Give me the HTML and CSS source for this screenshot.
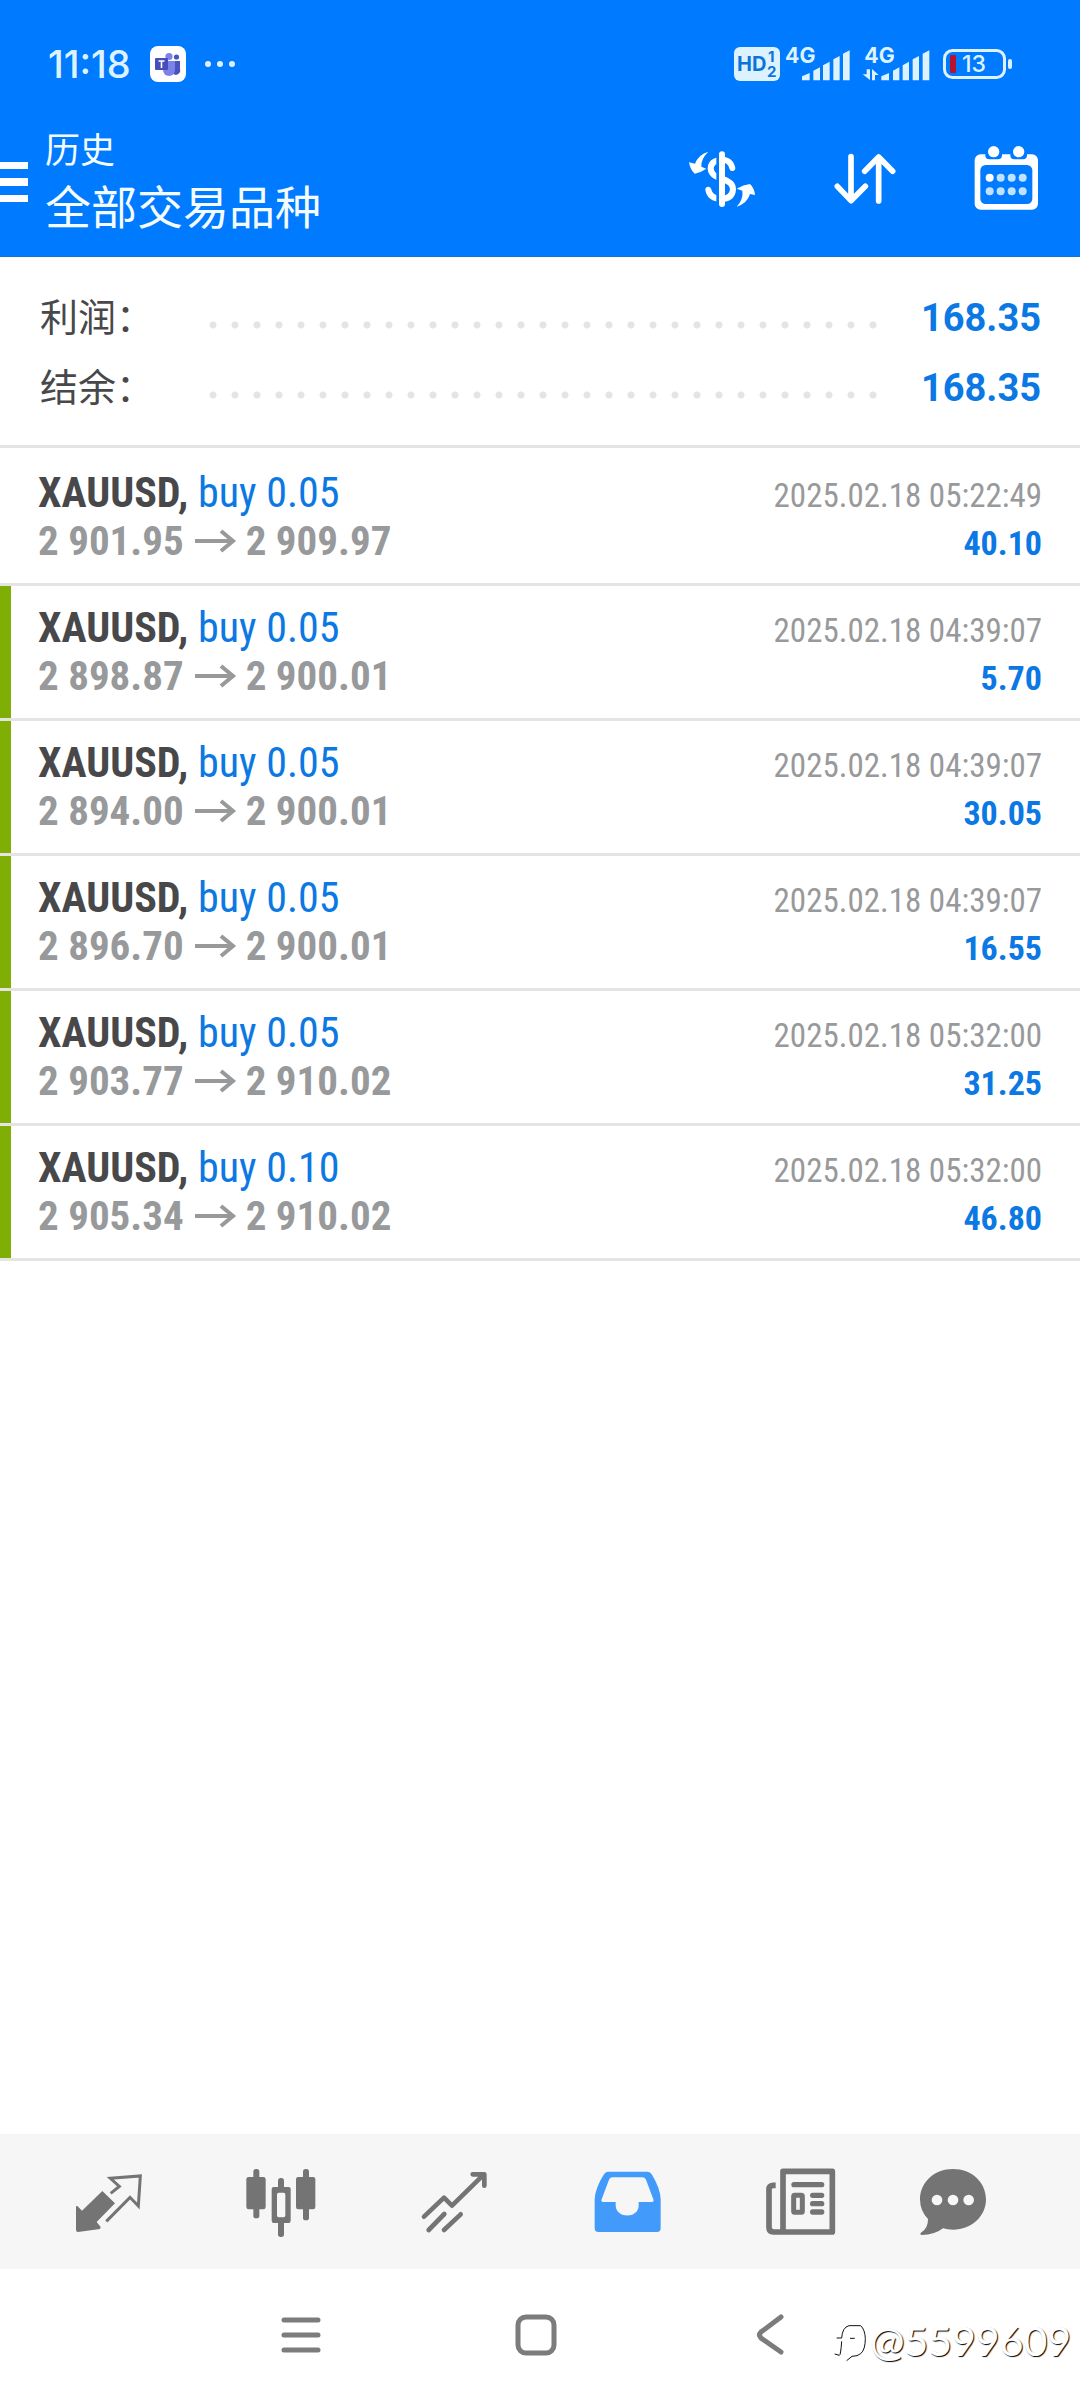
FILE: index.html
```html
<!DOCTYPE html>
<html lang="zh-CN">
<head>
<meta charset="utf-8">
<meta name="viewport" content="width=device-width, initial-scale=1">
<title>历史</title>
<link rel="stylesheet" href="styles.css">
</head>
<body>
<header class="top">
  <div class="status">
    <span class="clock">11:18</span>
    <svg class="teams" viewBox="0 0 36 36" aria-hidden="true">
      <rect width="36" height="36" rx="8" fill="#fff"/>
      <circle cx="26.5" cy="11" r="2.6" fill="#4b53bc"/>
      <path d="M22 15h8v8a4 4 0 0 1-8 3z" fill="#4b53bc"/>
      <circle cx="19" cy="10.5" r="3.6" fill="#7b83eb"/>
      <path d="M13 15h12v9a6 6 0 0 1-12 0z" fill="#7b83eb"/>
      <rect x="5" y="12" width="13" height="12" rx="1" fill="#464eb8"/>
      <path d="M8.5 15h6M11.5 15v7" stroke="#fff" stroke-width="1.6"/>
    </svg>
    <svg class="more" viewBox="0 0 32 8" aria-hidden="true"><circle cx="4" cy="4" r="3"/><circle cx="16" cy="4" r="3"/><circle cx="28" cy="4" r="3"/></svg>
    <div class="system">
      <svg width="46" height="34" viewBox="0 0 46 34"><rect width="46" height="34" rx="6"/><g class="badge-text"><text x="3" y="24" font-size="20">HD</text><text x="34" y="15" font-size="15">1</text><text x="33" y="30" font-size="15">2</text></g></svg>
      <svg class="cell" width="68" height="34" viewBox="195 33 204 102"><text x="195" y="82" font-size="64">4G</text><path d="M246 133V121L269 111V133ZM280 133V104L300 94V133ZM309 133V88L329 77V133ZM340 133V70L359 60V133ZM369 133V53L389 43V133Z"/></svg>
      <svg class="cell" width="68" height="34" viewBox="428 33 204 102"><text x="432" y="82" font-size="64">4G</text><path d="M483 133V121L506 111V133ZM518 133V104L537 94V133ZM547 133V88L566 77V133ZM577 133V70L596 60V133ZM607 133V53L627 43V133ZM439 100H449V132L427 115H439ZM455 133V99L475 117H464V133Z"/></svg>
      <svg class="battery" width="70" height="30" viewBox="0 0 70 30"><rect x="1.5" y="1.5" width="60" height="27" rx="8" fill="none" stroke="#dcf3ff" stroke-width="3"/><rect x="65" y="10" width="4" height="10" rx="2"/><rect x="7" y="6" width="6" height="18" rx="1" fill="#b8122c"/><text x="19" y="23" font-size="23">13</text></svg>
    </div>
  </div>
  <div class="bar">
    <button class="menu" aria-label="菜单"><svg width="28" height="40" viewBox="0 0 28 40"><path d="M0 0h28v7H0zM0 16h28v8H0zM0 33h28v7H0z" fill="#fff"/></svg></button>
    <div class="titles">
      <p class="section">历史</p>
      <h1 class="title">全部交易品种</h1>
    </div>
    <div class="actions">
      <button class="action" aria-label="货币"><svg viewBox="90 384 192 192">
        <path d="M217 450C212 429 196 424 182 426C162 428 152 438 152 452C154 472 170 476 186 482C208 490 219 498 219 515C217 535 203 543 184 543C160 542 148 532 145 515" fill="none" stroke="#fff" stroke-width="18" stroke-linecap="round"/>
        <path d="M173 396V572" stroke="#007aff" stroke-width="8"/><path d="M186 409V558" stroke="#fff" stroke-width="18" stroke-linecap="round"/>
        <path d="M87 433L105 437Q116 409 145 401Q122 424 124 446L139 452Q122 464 104 467Q91 456 87 433ZM230 512Q250 500 270 498Q283 510 285 531L270 528Q262 556 230 566Q251 543 247 518Z" fill="#fff"/></svg></button>
      <button class="action" aria-label="排序"><svg viewBox="516 384 192 192"><path d="M573 416V547M532 505L573 548L616 505M656 549V418M614 460L656 417L698 460" fill="none" stroke="#fff" stroke-width="17" stroke-linecap="round" stroke-linejoin="round"/></svg></button>
      <button class="action" aria-label="日期"><svg viewBox="943 384 192 192">
        <rect x="945" y="409" width="190" height="166" rx="18" fill="#fff"/><rect x="962" y="441" width="156" height="117" rx="16" fill="#007aff"/>
        <rect x="977" y="390" width="50" height="34" rx="12" fill="#007aff"/><rect x="1052" y="390" width="50" height="34" rx="12" fill="#007aff"/>
        <g fill="#fff"><circle cx="1002" cy="401" r="17"/><circle cx="1077" cy="401" r="17"/><circle cx="990" cy="479" r="12"/></g>
        <g fill="#bfe2ff"><circle cx="1023" cy="479" r="12"/><circle cx="1056" cy="479" r="12"/><circle cx="1089" cy="479" r="12"/><circle cx="990" cy="520" r="12"/><circle cx="1023" cy="520" r="12"/><circle cx="1056" cy="520" r="12"/><circle cx="1089" cy="520" r="12"/></g></svg></button>
    </div>
  </div>
</header>

<main class="content">
  <dl class="summary">
    <div class="sum-row"><dt>利润：</dt><dd>168.35</dd></div>
    <div class="sum-row"><dt>结余：</dt><dd>168.35</dd></div>
  </dl>
  <ul class="deals">
    <li class="deal">
      <p class="name"><b>XAUUSD,</b> buy 0.05</p><time class="date">2025.02.18 05:22:49</time>
      <p class="price">2 901.95<svg class="arrow" viewBox="0 0 40 22"><path d="M0 11H37M26 1L38 11L26 21"/></svg>2 909.97</p><span class="profit">40.10</span>
    </li>
    <li class="deal marked">
      <p class="name"><b>XAUUSD,</b> buy 0.05</p><time class="date">2025.02.18 04:39:07</time>
      <p class="price">2 898.87<svg class="arrow" viewBox="0 0 40 22"><path d="M0 11H37M26 1L38 11L26 21"/></svg>2 900.01</p><span class="profit">5.70</span>
    </li>
    <li class="deal marked">
      <p class="name"><b>XAUUSD,</b> buy 0.05</p><time class="date">2025.02.18 04:39:07</time>
      <p class="price">2 894.00<svg class="arrow" viewBox="0 0 40 22"><path d="M0 11H37M26 1L38 11L26 21"/></svg>2 900.01</p><span class="profit">30.05</span>
    </li>
    <li class="deal marked">
      <p class="name"><b>XAUUSD,</b> buy 0.05</p><time class="date">2025.02.18 04:39:07</time>
      <p class="price">2 896.70<svg class="arrow" viewBox="0 0 40 22"><path d="M0 11H37M26 1L38 11L26 21"/></svg>2 900.01</p><span class="profit">16.55</span>
    </li>
    <li class="deal marked">
      <p class="name"><b>XAUUSD,</b> buy 0.05</p><time class="date">2025.02.18 05:32:00</time>
      <p class="price">2 903.77<svg class="arrow" viewBox="0 0 40 22"><path d="M0 11H37M26 1L38 11L26 21"/></svg>2 910.02</p><span class="profit">31.25</span>
    </li>
    <li class="deal marked">
      <p class="name"><b>XAUUSD,</b> buy 0.10</p><time class="date">2025.02.18 05:32:00</time>
      <p class="price">2 905.34<svg class="arrow" viewBox="0 0 40 22"><path d="M0 11H37M26 1L38 11L26 21"/></svg>2 910.02</p><span class="profit">46.80</span>
    </li>
  </ul>
</main>

<nav class="tabs">
  <button class="tab" aria-label="行情"><svg viewBox="39 48 210 210"><path d="M127 120L165 157L110 213L122 228L120 234L54 243Q48 243 48 236V166L52 165L66 179Z"/><path d="M152 127L178 106L151 82L241 75L235 165L210 139L139 211" fill="none" stroke="#747474" stroke-width="9"/></svg></button>
  <button class="tab" aria-label="图表"><svg viewBox="558 48 210 210"><rect x="580" y="54" width="18" height="148" rx="8"/><rect x="559" y="78" width="58" height="97" rx="7"/><rect x="729" y="54" width="18" height="154" rx="8"/><rect x="708" y="78" width="58" height="97" rx="7"/><rect x="654" y="81" width="18" height="40" rx="8"/><rect x="654" y="200" width="18" height="58" rx="8"/><path fill-rule="evenodd" d="M641 108H686Q692 108 692 114V209Q692 216 686 216H641Q635 216 635 209V114Q635 108 641 108ZM656 125Q651 125 651 131V193Q651 199 656 199H671Q676 199 676 193V131Q676 125 671 125Z"/></svg></button>
  <button class="tab" aria-label="交易"><svg viewBox="1077 48 210 210"><path d="M1092 197L1152 140L1176 164L1271 71M1238 70H1273V104M1106 237L1153 189M1152 237L1202 190" fill="none" stroke="#747474" stroke-width="14" stroke-linecap="round" stroke-linejoin="round"/></svg></button>
  <button class="tab" aria-label="历史" aria-current="page"><svg viewBox="36 48 210 210"><path fill="#429bfb" fill-rule="evenodd" d="M84 62H203Q211 62 216 71Q241 112 242 145V232Q242 243 231 243H55Q44 243 44 232V145Q46 110 71 71Q76 62 84 62ZM98 79Q90 79 87 86L65 145Q62 153 70 153H107V164C109 203 175 203 176 164V153H215Q223 153 220 145L198 86Q195 79 187 79Z"/></svg></button>
  <button class="tab" aria-label="新闻"><svg viewBox="556 48 210 210"><path d="M610 243H758V61H610ZM610 243H582Q568 243 568 229V115Q568 104 580 103H588" fill="none" stroke="#747474" stroke-width="17" stroke-linejoin="round"/><path d="M643 101H726M699 133H726M699 158H726M699 183H726" fill="none" stroke="#747474" stroke-width="16" stroke-linecap="round"/><rect x="642" y="133" width="26" height="51" rx="3" fill="none" stroke="#747474" stroke-width="15"/></svg></button>
  <button class="tab" aria-label="消息"><svg viewBox="1011 48 210 210"><path fill-rule="evenodd" d="M1119 54C1175 54 1218 94 1218 145S1175 236 1119 236Q1103 236 1089 232Q1066 251 1024 252Q1019 250 1022 246Q1045 232 1044 204Q1020 180 1020 145C1020 94 1063 54 1119 54ZM1087 147A16 16 0 1 0 1055 147A16 16 0 1 0 1087 147ZM1135 147A16 16 0 1 0 1103 147A16 16 0 1 0 1135 147ZM1182 147A16 16 0 1 0 1150 147A16 16 0 1 0 1182 147Z"/></svg></button>
</nav>
<footer class="sysnav">
  <button class="key" aria-label="最近任务"><svg viewBox="0 0 44 44"><path d="M5 7H39M5 22H39M5 37H39"/></svg></button>
  <button class="key" aria-label="主屏幕"><svg viewBox="0 0 44 44"><rect x="4" y="4" width="36" height="36" rx="8"/></svg></button>
  <button class="key" aria-label="返回"><svg viewBox="0 0 44 44"><path d="M32 4L12 19Q9 22 12 25L32 39"/></svg></button>
  <p class="watermark"><svg width="34" height="44" viewBox="40 68 102 132"><path d="M54 125H69Q71 93 91 88H126Q139 100 140 127Q140 160 126 172Q117 180 100 180L84 193M69 135Q66 178 62 177L48 173M94 126H108" fill="none" stroke="#111" stroke-width="3"/></svg>@5599609</p>
</footer>
</body>
</html>
```
FILE: styles.css
```css
* { box-sizing: border-box; }
body {
  margin: 0;
  min-height: 100vh;
  display: flex;
  flex-direction: column;
  background: #fff;
  font-family: "Roboto", "Noto Sans CJK SC", sans-serif;
}
p, h1, dl, dd, ul { margin: 0; padding: 0; }
ul { list-style: none; }
svg { display: block; overflow: visible; }
button { padding: 0; border: 0; background: none; font: inherit; cursor: pointer; }

.top { background: #007aff; color: #f4fcff; border-bottom: 1px solid #1073d6; }
.status {
  display: flex;
  align-items: center;
  height: 122px;
  padding: 6px 67px 0 48px;
  font-family: "Inter", sans-serif;
  color: #dcf3ff;
}
.status svg { fill: #dcf3ff; flex: none; }
.clock { width: 102px; font-size: 38px; font-weight: 500; line-height: 44px; }
.teams { width: 36px; height: 36px; }
.more { width: 32px; height: 8px; margin-left: 18px; }
.system { display: flex; align-items: center; margin-left: auto; font-weight: 700; }
.system .badge-text { fill: #0b74dc; }
.system .cell { margin-left: 5px; }
.system .cell + .cell { margin-left: 10px; }
.system .battery { margin-left: 12px; font-weight: 500; }

.bar { display: flex; padding: 0 42px 22px 0; }
.menu { width: 28px; margin-right: 17px; padding-top: 8px; }
.titles { font-family: "Noto Sans CJK SC", sans-serif; }
.section { font-size: 35px; line-height: 52px; }
.title { font-size: 46px; line-height: 60px; font-weight: 400; }
.actions { display: flex; align-items: center; gap: 78px; margin-left: auto; }
.action svg { width: 64px; height: 64px; }

.content { flex: 1; }
.summary { padding: 26px 39px 22px 40px; border-bottom: 3px solid #e4e4e4; }
.sum-row { display: flex; line-height: 70px; font-size: 38px; }
.sum-row dt { width: 162px; color: #48484a; }
.sum-row dd {
  display: flex;
  flex: 1;
  font-weight: 700;
  color: #0b78e3;
}
.sum-row dd::before {
  content: "";
  flex: 1;
  margin-right: 37px;
  background: radial-gradient(circle, #e4e4e4 3px, transparent 4px) 0 38px / 22px 8px repeat-x;
}

.deals { padding-top: 3px; }
.deal {
  display: grid;
  grid-template-columns: 1fr auto;
  grid-auto-rows: 48px;
  align-items: baseline;
  padding: 18px 38px;
  border-bottom: 3px solid #e4e4e4;
  font-family: "Roboto Condensed", "Roboto", sans-serif;
  font-size: 42px;
  line-height: 48px;
}
.marked { background: linear-gradient(#7fae04, #7fae04) 0 0 / 11px 100% no-repeat padding-box; }
.name { color: #0b78e3; }
.name b { color: #48484a; font-weight: 700; }
.price { display: flex; align-items: center; font-size: 41px; font-weight: 700; color: #97999b; }
.arrow { width: 40px; height: 22px; margin: 0 11px; fill: none; stroke: #97999b; stroke-width: 4; }
.date, .profit { text-align: right; }
.date { font-size: 33px; color: #97999b; }
.profit { font-size: 34px; font-weight: 700; color: #0b78e3; }

.tabs {
  display: grid;
  grid-template-columns: repeat(5, 173fr) 132fr;
  height: 135px;
  padding: 0 62px 0 22px;
  background: #f6f6f6;
}
.tab { display: flex; align-items: center; justify-content: center; }
.tab svg { width: 70px; height: 70px; fill: #747474; }

.sysnav {
  position: relative;
  display: grid;
  grid-template-columns: repeat(3, 235px);
  justify-content: center;
  height: 131px;
  padding-right: 8px;
}
.key { display: flex; align-items: center; justify-content: center; }
.key svg { width: 44px; height: 44px; fill: none; stroke: #7c7c7c; stroke-width: 5; stroke-linecap: round; }
.watermark {
  position: absolute;
  right: 9px;
  bottom: 35px;
  display: flex;
  align-items: center;
  gap: 4px;
  font: 400 41px/48px "Lato", sans-serif;
  color: #fff;
  text-shadow: 1px 1px 1px #000;
}
```
